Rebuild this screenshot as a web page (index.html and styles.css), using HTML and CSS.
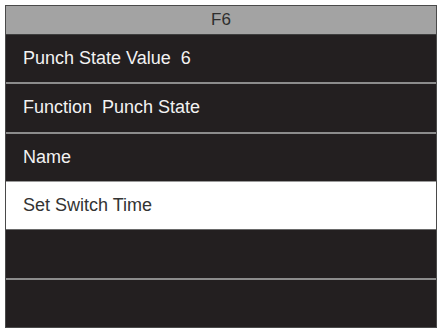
FILE: index.html
```html
<!DOCTYPE html>
<html>
<head>
<meta charset="utf-8">
<link rel="stylesheet" href="styles.css">
</head>
<body>
<div class="screen">
  <div class="title">F6</div>
  <div class="list">
    <div class="row">Punch State Value&nbsp; 6</div>
    <div class="row">Function&nbsp; Punch State</div>
    <div class="row">Name</div>
    <div class="row selected">Set Switch Time</div>
    <div class="row"></div>
    <div class="row"></div>
  </div>
</div>
</body>
</html>
```
FILE: styles.css
```css
html, body {
  margin: 0;
  padding: 0;
  background: #ffffff;
}
body {
  width: 439px;
  height: 329px;
  overflow: hidden;
  font-family: "Liberation Sans", Arial, sans-serif;
}
.screen {
  margin: 5px 0 0 5px;
  width: 432px;
  height: 323px;
  box-sizing: border-box;
  border: 1px solid #4a4a4a;
  display: flex;
  flex-direction: column;
  background: #231f20;
}
.title {
  height: 28px;
  flex: none;
  background: #a3a3a3;
  border-bottom: 1px solid #3e3e3e;
  color: #2e2e2e;
  font-size: 17px;
  display: flex;
  align-items: center;
  justify-content: center;
}
.list {
  flex: 1;
  display: flex;
  flex-direction: column;
}
.row {
  flex: 1;
  display: flex;
  align-items: center;
  padding-left: 17px;
  color: #f2f2f2;
  font-size: 18px;
  background: #231f20;
}
.row + .row {
  border-top: 2px solid #8c8c8c;
}
.row.selected {
  background: #ffffff;
  color: #333333;
  border-top: 1px solid #9a9a9a;
  border-bottom: 1px solid #6a6a6a;
}
.row.selected + .row {
  border-top: none;
}
```
